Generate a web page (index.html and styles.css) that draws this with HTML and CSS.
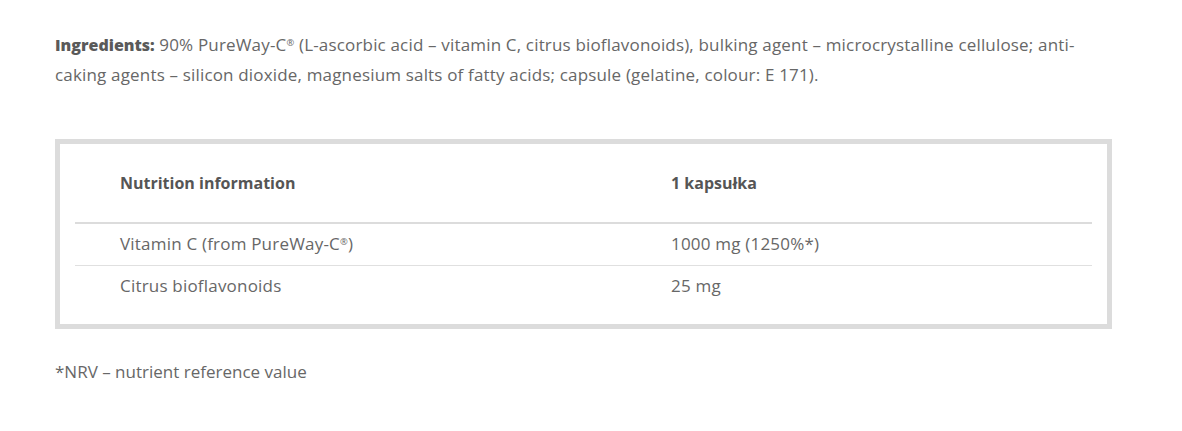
FILE: index.html
```html
<!DOCTYPE html>
<html lang="en">
<head>
<meta charset="utf-8">
<link rel="stylesheet" href="styles.css">
</head>
<body>
<div class="page">
  <p class="ingredients"><strong>Ingredients:</strong> 90% PureWay-C<span class="reg">®</span> (L-ascorbic acid – vitamin C, citrus bioflavonoids), bulking agent – microcrystalline cellulose; anti-caking agents – silicon dioxide, magnesium salts of fatty acids; capsule (gelatine, colour: E 171).</p>
  <div class="box">
    <table class="nutri">
      <thead>
        <tr><th class="c1">Nutrition information</th><th class="c2">1 kapsułka</th></tr>
      </thead>
      <tbody>
        <tr class="r1"><td class="c1">Vitamin C (from PureWay-C<span class="reg">®</span>)</td><td class="c2">1000 mg (1250%*)</td></tr>
        <tr class="r2"><td class="c1">Citrus bioflavonoids</td><td class="c2">25 mg</td></tr>
      </tbody>
    </table>
  </div>
  <p class="note">*NRV – nutrient reference value</p>
</div>
</body>
</html>
```
FILE: styles.css
```css
html, body { margin: 0; padding: 0; background: #fff; }
body {
  font-family: "Open Sans", "Liberation Sans", sans-serif;
  font-size: 17px;
  color: #676767;
}
.page { padding: 30px 70px 0 55px; }
.ingredients { margin: 0; line-height: 30px; width: 1040px; letter-spacing: 0.17px; }
.ingredients strong { font-weight: 800; color: #5a5a5a; font-size: 16px; letter-spacing: 0; }
.reg { font-size: 0.55em; vertical-align: 0.5em; line-height: 0; }
.box {
  margin-top: 49px;
  border: 5px solid #dcdcdc;
  padding: 15px;
  box-sizing: border-box;
  width: 1057px;
}
.nutri { width: 100%; border-collapse: collapse; }
.nutri th, .nutri td { text-align: left; padding: 0 0 0 45px; line-height: 24px; vertical-align: top; }
.nutri td { letter-spacing: 0.2px; }
.nutri .c1 { width: 551px; box-sizing: border-box; }
.nutri th {
  font-size: 16px;
  padding-top: 12px;
  padding-bottom: 27px;
  font-weight: 700;
  color: #555;
  border-bottom: 2px solid #dcdcdc;
}
.nutri .r1 td { padding-top: 8px; padding-bottom: 9px; border-bottom: 1px solid #e0e0e0; }
.nutri .r2 td { padding-top: 8px; padding-bottom: 11px; }
.note { margin: 31px 0 0; line-height: 24px; }
```
